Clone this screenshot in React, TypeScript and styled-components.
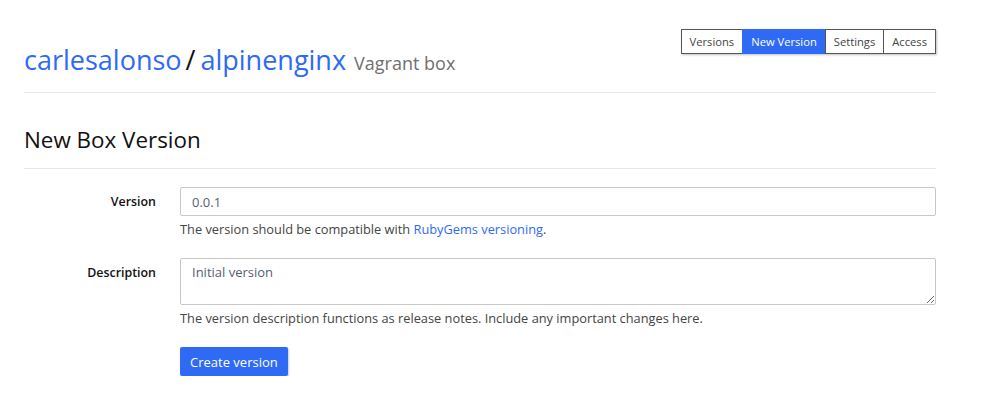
import React from "react";
import styled, { createGlobalStyle } from "styled-components";

const Global = createGlobalStyle`
  html, body { margin: 0; padding: 0; background: #fff; }
  body { font-family: "Open Sans", "Noto Sans", sans-serif; color: #222; }
  * { box-sizing: border-box; }
`;

const Page = styled.div`
  width: 912px;
  margin-left: 24px;
`;

const Header = styled.header`
  display: flex;
  justify-content: space-between;
  align-items: flex-start;
  padding-top: 29px;
  padding-bottom: 12px;
  border-bottom: 1px solid #e6e6e6;
`;

const Title = styled.h1`
  margin: 14px 0 0 0;
  font-weight: 400;
  font-size: 27px;
  line-height: 34px;
  display: flex;
  align-items: baseline;
`;

const TitleLink = styled.a`
  color: #2f6af5;
  text-decoration: none;
`;

const Slash = styled.span`
  color: #111;
  margin: 0 5px 0 4px;
`;

const Sub = styled.small`
  color: #6f6f6f;
  font-size: 18px;
  margin-left: 8px;
`;

const Nav = styled.nav`
  display: flex;
  box-shadow: 1px 1px 2px rgba(0, 0, 0, 0.25);
`;

const NavItem = styled.a<{ $active?: boolean }>`
  font-size: 11.2px;
  line-height: 23px;
  padding: 0 8px;
  border: 1px solid #555;
  margin-left: -1px;
  color: ${(p) => (p.$active ? "#fff" : "#444")};
  background: ${(p) => (p.$active ? "#2f6af5" : "#fff")};
  border-color: ${(p) => (p.$active ? "#2f6af5" : "#555")};
  text-decoration: none;
  &:first-child { margin-left: 0; }
`;

const SectionTitle = styled.h2`
  margin: 0;
  padding: 32px 0 13px;
  font-size: 22.4px;
  font-weight: 400;
  line-height: 30px;
  color: #111;
  border-bottom: 1px solid #e6e6e6;
`;

const Form = styled.form`
  padding-top: 18px;
  display: grid;
  grid-template-columns: 132px 1fr;
  column-gap: 24px;
`;

const Label = styled.label`
  text-align: right;
  font-size: 12.4px;
  font-weight: 600;
  color: #111;
  padding-top: 6px;
  line-height: 18px;
`;

const Field = styled.div`
  margin-bottom: 20px;
`;

const Input = styled.input`
  display: block;
  width: 100%;
  height: 29px;
  border: 1px solid #c8c8c8;
  border-radius: 2px;
  padding: 0 11px;
  font-family: inherit;
  font-size: 13px;
  color: #555e70;
  background: #fff;
`;

const Textarea = styled.textarea`
  display: block;
  width: 100%;
  height: 47px;
  border: 1px solid #c8c8c8;
  border-radius: 2px;
  padding: 4px 11px;
  font-family: inherit;
  font-size: 13px;
  line-height: 18px;
  color: #555e70;
  background: #fff;
  resize: vertical;
`;

const Help = styled.p`
  margin: 4px 0 0;
  font-size: 12.8px;
  line-height: 18px;
  color: #444;
`;

const HelpLink = styled.a`
  color: #2f6af5;
  text-decoration: none;
`;

const Button = styled.button`
  font-family: inherit;
  font-size: 13px;
  color: #fff;
  background: #2f6af5;
  border: none;
  border-radius: 2px;
  height: 29px;
  padding: 0 10px;
  box-shadow: 1px 1px 2px rgba(0, 0, 0, 0.2);
  justify-self: start;
`;

export default function App() {
  return (
    <>
      <Global />
      <Page>
        <Header>
          <Title>
            <TitleLink href="#">carlesalonso</TitleLink>
            <Slash>/</Slash>
            <TitleLink href="#">alpinenginx</TitleLink>
            <Sub>Vagrant box</Sub>
          </Title>
          <Nav>
            <NavItem href="#">Versions</NavItem>
            <NavItem href="#" $active>New Version</NavItem>
            <NavItem href="#">Settings</NavItem>
            <NavItem href="#">Access</NavItem>
          </Nav>
        </Header>
        <SectionTitle>New Box Version</SectionTitle>
        <Form>
          <Label>Version</Label>
          <Field>
            <Input defaultValue="0.0.1" />
            <Help>
              The version should be compatible with{" "}
              <HelpLink href="#">RubyGems versioning</HelpLink>.
            </Help>
          </Field>
          <Label>Description</Label>
          <Field>
            <Textarea defaultValue="Initial version" />
            <Help>
              The version description functions as release notes. Include any important changes here.
            </Help>
          </Field>
          <span />
          <Button type="button">Create version</Button>
        </Form>
      </Page>
    </>
  );
}
